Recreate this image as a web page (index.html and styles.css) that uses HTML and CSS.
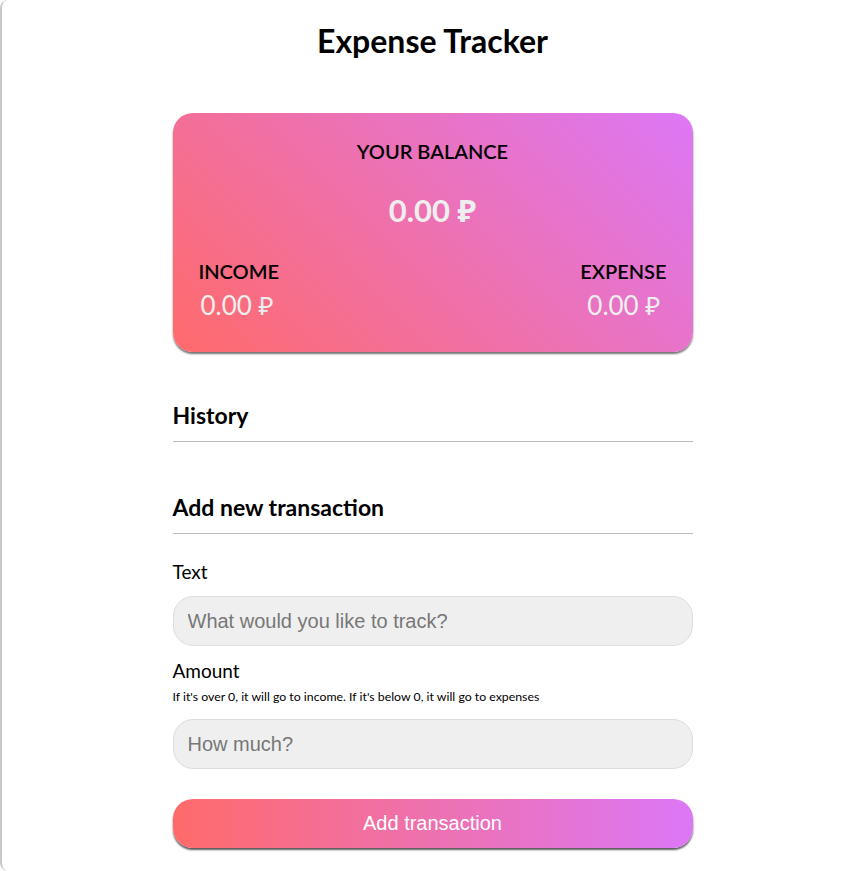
FILE: index.html
```html
<!DOCTYPE html>
<html lang="en">
<head>
<meta charset="utf-8">
<title>Expense Tracker</title>
<link rel="stylesheet" href="styles.css">
</head>
<body>
<div class="frame">
  <main class="app">
    <h1 class="title">Expense Tracker</h1>
    <section class="balance-card">
      <h4 class="balance-label">YOUR BALANCE</h4>
      <div class="balance-value">0.00 ₽</div>
      <div class="inc-exp">
        <div class="col">
          <h4 class="col-label">INCOME</h4>
          <div class="col-value">0.00 ₽</div>
        </div>
        <div class="col col-right">
          <h4 class="col-label">EXPENSE</h4>
          <div class="col-value">0.00 ₽</div>
        </div>
      </div>
    </section>
    <h3 class="section-title">History</h3>
    <ul class="list"></ul>
    <h3 class="section-title">Add new transaction</h3>
    <form class="form">
      <div class="field">
        <label class="label" for="text">Text</label>
        <input class="input" id="text" type="text" placeholder="What would you like to track?">
      </div>
      <div class="field">
        <label class="label" for="amount">Amount<br><small class="hint">If it's over 0, it will go to income. If it's below 0, it will go to expenses</small></label>
        <input class="input" id="amount" type="number" placeholder="How much?">
      </div>
      <button class="btn" type="button">Add transaction</button>
    </form>
  </main>
</div>
</body>
</html>
```
FILE: styles.css
```css
* { box-sizing: border-box; }
html, body { margin: 0; padding: 0; background: #fff; }
body { font-family: Lato, "Noto Sans", sans-serif; color: #000; }
.frame {
  min-height: 871px;
  border-left: 2px solid #c8c8c8;
  border-radius: 8px 0 0 8px;
  padding-top: 22px;
}
.app {
  width: 520px;
  margin: 0 auto;
  position: relative;
  left: 1px;
}
.title {
  margin: 0 0 54px;
  text-align: center;
  font-size: 32px;
  font-weight: 700;
  line-height: 37px;
}
.balance-card {
  border-radius: 20px;
  background: linear-gradient(45deg, #ff6b6b, #dc77f6);
  box-shadow: 0 2px 2px rgba(0,0,0,0.55);
  padding: 26px 26px 22px;
  height: 239px;
}
.balance-label {
  margin: 0;
  text-align: center;
  font-size: 20px;
  font-weight: 600;
  line-height: 24px;
}
.balance-value {
  margin-top: 29px;
  text-align: center;
  font-size: 31px;
  font-weight: 700;
  color: #eee;
  line-height: 36px;
}
.inc-exp {
  display: flex;
  justify-content: space-between;
  margin-top: 31px;
}
.col-label {
  margin: 0;
  font-size: 20px;
  font-weight: 600;
  line-height: 24px;
}
.col-value {
  margin-top: 7px;
  padding: 0 2px;
  font-size: 26px;
  color: #eee;
  line-height: 30px;
}
.col-right { text-align: right; }
.col-right .col-value { padding: 0 6px 0 0; }
.section-title {
  margin: 0;
  font-size: 23px;
  font-weight: 700;
  line-height: 28px;
  padding-bottom: 12px;
  border-bottom: 1px solid #bbb;
}
.balance-card + .section-title { margin-top: 49px; }
.list { margin: 0; padding: 0; list-style: none; height: 51px; }
.form { margin-top: 26px; }
.field { display: flex; flex-direction: column; }
.label {
  font-size: 19px;
  line-height: 24px;
  margin-bottom: 12px;
}
.field + .field .label { margin-bottom: 14px; }
.hint {
  display: block;
  font-size: 12.3px;
  line-height: 16px;
  margin-top: 6px;
}
.input {
  height: 50px;
  border: 1px solid #dedede;
  border-radius: 20px;
  background: #efefef;
  padding: 0 14px;
  font-family: "Liberation Sans", Arial, sans-serif;
  font-size: 20px;
  color: #333;
  margin-bottom: 13px;
  outline: none;
}
.input::placeholder { color: #777; }
.field + .field .input { margin-bottom: 14px; }
.btn {
  display: block;
  width: 100%;
  height: 49px;
  margin-top: 16px;
  border: none;
  border-radius: 20px;
  background: linear-gradient(to right, #ff6b6b, #dc77f6);
  box-shadow: 0 2px 2px rgba(0,0,0,0.65);
  color: #fff;
  font-family: "Liberation Sans", Arial, sans-serif;
  font-size: 20px;
  cursor: pointer;
}
```
